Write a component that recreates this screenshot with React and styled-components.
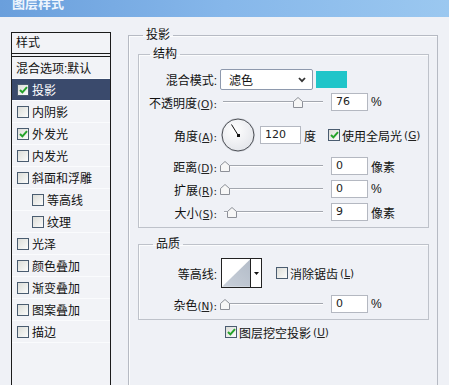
import React from 'react';
import styled, { createGlobalStyle } from 'styled-components';

const GlobalStyle = createGlobalStyle`
  html, body { margin: 0; padding: 0; }
  body {
    background: #eff1f6;
    font-family: "Liberation Sans", "Noto Sans CJK SC", sans-serif;
    font-size: 12px;
    color: #111;
  }
  * { box-sizing: border-box; }
`;

const Window = styled.div`
  width: 449px;
  height: 385px;
  overflow: hidden;
  background: #eff1f6;
`;

const TitleBar = styled.div`
  height: 17px;
  overflow: hidden;
  padding-left: 12px;
  background: linear-gradient(to right, #6a9fdc, #86b7ea 50%, #9bc8f0);
`;

const Title = styled.div`
  margin-top: -3px;
  font-size: 13px;
  line-height: 13px;
  font-weight: bold;
  color: #eef5fd;
`;

const Body = styled.div`
  display: flex;
  align-items: flex-start;
  padding-left: 11px;
`;

/* ---------- left style list ---------- */

const StylePanel = styled.div`
  margin-top: 15px;
  width: 100px;
  height: 380px;
  border: 1px solid #1b1b1b;
  background: #f2f3f7;
`;

const PanelHeader = styled.div`
  height: 24px;
  line-height: 20px;
  padding-left: 4px;
  border-bottom: 4px double #1b1b1b;
`;

const StyleItem = styled.div`
  height: 22px;
  display: flex;
  align-items: center;
  gap: 3px;
  padding-left: ${p => (p.$indent ? 20 : p.$plain ? 4 : 5)}px;
  border-bottom: 1px solid #fafbfd;
  background: ${p => (p.$active ? '#3a4a6c' : 'transparent')};
  color: ${p => (p.$active ? '#fff' : '#111')};
`;

/* ---------- checkbox ---------- */

const Box = styled.span`
  flex: none;
  width: 12px;
  height: 12px;
  border: 1px solid #4a5c70;
  background: linear-gradient(135deg, #dcddd8, #fbfbfb);
  display: inline-flex;
  align-items: center;
  justify-content: center;
`;

function Check({ on }) {
  return (
    <Box>
      {on && (
        <svg width="9" height="8" viewBox="0 0 9 8">
          <path d="M1 4 L3.4 6.4 L8 1.2" stroke="#25a32a" strokeWidth="2" fill="none" />
        </svg>
      )}
    </Box>
  );
}

/* small latin part of a label, e.g. "(O):" */
const Key = styled.span`
  font-family: "DejaVu Sans", "Liberation Sans", sans-serif;
  font-size: 10.5px;
  color: #222;
`;

/* ---------- right side groups ---------- */

const Group = styled.fieldset`
  margin: 0;
  min-width: 0;
  border: 1px solid #bec2ca;
  box-shadow: inset 1px 1px 0 #fbfcfd;
`;

const OuterGroup = styled(Group)`
  margin: 11px 0 0 17px;
  width: 310px;
  min-height: 380px;
  padding: 0 8px 0 9px;
  border-color: #b6bac3;
`;

const InnerGroup = styled(Group)`
  margin-top: ${p => p.$mt}px;
  width: 291px;
  padding: ${p => p.$pt}px 0 6px 0;
`;

const Legend = styled.legend`
  margin-left: ${p => p.$ml}px;
  padding: 0 3px;
  font-size: 12px;
  line-height: 14px;
`;

const Row = styled.div`
  display: flex;
  align-items: center;
  height: ${p => p.$h}px;
  margin-top: ${p => p.$mt || 0}px;
`;

const Label = styled.div`
  width: 78px;
  text-align: right;
  white-space: nowrap;
  flex: none;
`;

const SelectBox = styled.div`
  margin-left: 3px;
  width: 93px;
  height: 21px;
  display: flex;
  align-items: center;
  justify-content: space-between;
  padding: 0 6px 0 8px;
  background: #fff;
  border: 1px solid #8e99ad;
  border-radius: 2px;
`;

const Swatch = styled.div`
  margin-left: 3px;
  width: 31px;
  height: 17px;
  background: #1fc5c9;
`;

const Field = styled.div`
  margin-left: ${p => p.$ml}px;
  width: ${p => p.$w}px;
  height: 18px;
  line-height: 16px;
  padding-left: 4px;
  background: #fff;
  border: 1px solid #b4b8c1;
  font-family: "DejaVu Sans", sans-serif;
  font-size: 11px;
  color: #222;
`;

const Unit = styled.span`
  margin-left: ${p => p.$ml || 3}px;
  white-space: nowrap;
`;

const SliderWrap = styled.div`
  position: relative;
  margin-left: 4px;
  width: 102px;
  height: 18px;
`;

const Track = styled.div`
  position: absolute;
  left: ${p => p.$start || 0}px;
  right: 0;
  top: 8px;
  height: 2px;
  border-top: 1px solid #a3a7af;
  border-bottom: 1px solid #fdfdfe;
`;

const Thumb = styled.svg`
  position: absolute;
  top: 4px;
`;

function Slider({ pos, start }) {
  return (
    <SliderWrap>
      <Track $start={start} />
      <Thumb width="10" height="11" viewBox="0 0 10 11" style={{ left: pos - 5 }}>
        <path d="M0.5 10.5 V4.5 L5 0.5 L9.5 4.5 V10.5 Z" fill="#f7f7f7" stroke="#8d9098" />
      </Thumb>
    </SliderWrap>
  );
}

const Dial = styled.svg`
  margin-left: 3px;
  flex: none;
`;

const ContourBox = styled.div`
  margin-left: 4px;
  width: 41px;
  height: 30px;
  display: flex;
  border: 1px solid #222;
  background: #fff;
`;

const ContourDrop = styled.div`
  width: 11px;
  border-left: 1px solid #222;
  display: flex;
  align-items: center;
  justify-content: center;
`;

const CheckLabel = styled.div`
  display: flex;
  align-items: center;
  gap: 2px;
  margin-left: ${p => p.$ml || 0}px;
  white-space: nowrap;
`;

const BottomRow = styled.div`
  margin-top: 5px;
  height: 14px;
  padding-left: 87px;
  display: flex;
  align-items: center;
`;

const styles = [
  { name: '投影', on: true, active: true },
  { name: '内阴影' },
  { name: '外发光', on: true },
  { name: '内发光' },
  { name: '斜面和浮雕' },
  { name: '等高线', indent: true },
  { name: '纹理', indent: true },
  { name: '光泽' },
  { name: '颜色叠加' },
  { name: '渐变叠加' },
  { name: '图案叠加' },
  { name: '描边' },
];

function SliderRow({ label, mnemonic, value, unit, pos, start, mt }) {
  return (
    <Row $h={18} $mt={mt}>
      <Label>
        {label}<Key>(<u>{mnemonic}</u>):</Key>
      </Label>
      <Slider pos={pos} start={start} />
      <Field $ml={8} $w={37}>{value}</Field>
      <Unit>{unit}</Unit>
    </Row>
  );
}

export default function App() {
  return (
    <Window>
      <GlobalStyle />
      <TitleBar>
        <Title>图层样式</Title>
      </TitleBar>
      <Body>
        <StylePanel>
          <PanelHeader>样式</PanelHeader>
          <StyleItem $plain>混合选项:默认</StyleItem>
          {styles.map(s => (
            <StyleItem key={s.name} $active={s.active} $indent={s.indent}>
              <Check on={s.on} />
              {s.name}
            </StyleItem>
          ))}
        </StylePanel>

        <OuterGroup>
          <Legend $ml={5}>投影</Legend>

          <InnerGroup $mt={5} $pt={8}>
            <Legend $ml={11}>结构</Legend>
            <Row $h={21}>
              <Label>混合模式:</Label>
              <SelectBox>
                滤色
                <svg width="8" height="6" viewBox="0 0 8 6">
                  <path d="M1 1 L4 4.2 L7 1" stroke="#333" strokeWidth="1.8" fill="none" />
                </svg>
              </SelectBox>
              <Swatch />
            </Row>
            <SliderRow label="不透明度" mnemonic="O" value="76" unit="%" pos={77} start={2} mt={3} />
            <Row $h={36} $mt={6}>
              <Label>
                角度<Key>(<u>A</u>):</Key>
              </Label>
              <Dial width="36" height="36" viewBox="0 0 36 36">
                <defs>
                  <radialGradient id="dialFill" cx="40%" cy="35%" r="70%">
                    <stop offset="0%" stopColor="#ffffff" />
                    <stop offset="100%" stopColor="#e3e5ea" />
                  </radialGradient>
                </defs>
                <circle cx="18" cy="18" r="17" fill="#d8dbe2" />
                <circle cx="18" cy="18" r="16" fill="url(#dialFill)" stroke="#4c4f55" strokeWidth="1" />
                <line x1="18" y1="18" x2="11.5" y2="7.5" stroke="#111" strokeWidth="1" />
                <rect x="17" y="17" width="3" height="3" fill="#111" />
              </Dial>
              <Field $ml={4} $w={41}>120</Field>
              <Unit>度</Unit>
              <CheckLabel $ml={12}>
                <Check on />
                使用全局光<Key>(<u>G</u>)</Key>
              </CheckLabel>
            </Row>
            <SliderRow label="距离" mnemonic="D" value="0" unit="像素" pos={4} mt={4} />
            <SliderRow label="扩展" mnemonic="R" value="0" unit="%" pos={4} mt={5} />
            <SliderRow label="大小" mnemonic="S" value="9" unit="像素" pos={11} start={3} mt={5} />
          </InnerGroup>

          <InnerGroup $mt={9} $pt={7}>
            <Legend $ml={14}>品质</Legend>
            <Row $h={30}>
              <Label>等高线:</Label>
              <ContourBox>
                <svg width="29" height="28" viewBox="0 0 29 28">
                  <defs>
                    <linearGradient id="contourFill" x1="0" y1="1" x2="1" y2="0">
                      <stop offset="0%" stopColor="#c9d0da" />
                      <stop offset="100%" stopColor="#b3bcc8" />
                    </linearGradient>
                  </defs>
                  <path d="M0 28 L29 0 L29 28 Z" fill="url(#contourFill)" />
                </svg>
                <ContourDrop>
                  <svg width="5" height="3" viewBox="0 0 5 3">
                    <path d="M0 0 H5 L2.5 3 Z" fill="#111" />
                  </svg>
                </ContourDrop>
              </ContourBox>
              <CheckLabel $ml={14}>
                <Check />
                消除锯齿<Key>(<u>L</u>)</Key>
              </CheckLabel>
            </Row>
            <SliderRow label="杂色" mnemonic="N" value="0" unit="%" pos={4} mt={7} />
          </InnerGroup>

          <BottomRow>
            <CheckLabel>
              <Check on />
              图层挖空投影<Key>(<u>U</u>)</Key>
            </CheckLabel>
          </BottomRow>
        </OuterGroup>
      </Body>
    </Window>
  );
}
